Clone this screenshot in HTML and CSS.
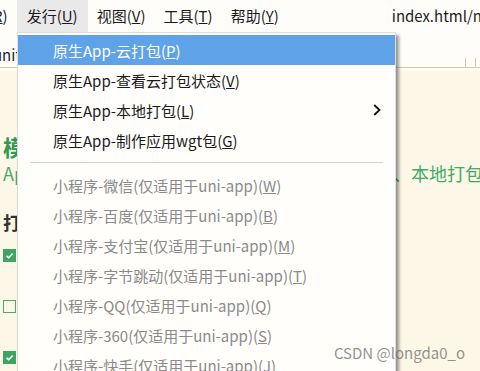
FILE: index.html
```html
<!DOCTYPE html>
<html>

<head>
    <title>发行</title>
    <link rel="stylesheet" href="styles.css">
</head>

<body>
    <div class="menubar">
        <span class="mb-item mb-cut">运行(<u>R</u>)</span>
        <span class="mb-item mb-open">发行(<u>U</u>)</span>
        <span class="mb-item">视图(<u>V</u>)</span>
        <span class="mb-item">工具(<u>T</u>)</span>
        <span class="mb-item">帮助(<u>Y</u>)</span>
        <span class="mb-title">index.html/nvue-demo - HBuilder X</span>
    </div>

    <div class="tabbar">
        <div class="tab">unitest/pages/index/index.vue</div>
        <div class="tab-next"></div>
    </div>

    <div class="content">
        <h2 class="title">模板</h2>
        <p class="desc"><span class="desc-left">App云打包</span><span>、本地打包和制作wgt包</span></p>
        <h3 class="sub">打包</h3>
        <div class="check on"><svg viewBox="0 0 13 13"><path d="M3.5 6.8 L5.6 8.7 L9.6 4.6" /></svg></div>
        <div class="check"></div>
        <div class="check on"><svg viewBox="0 0 13 13"><path d="M3.5 6.8 L5.6 8.7 L9.6 4.6" /></svg></div>
    </div>

    <div class="menu">
        <div class="mi active"><span>原生App-云打包(<u>P</u>)</span></div>
        <div class="mi"><span>原生App-查看云打包状态(<u>V</u>)</span></div>
        <div class="mi"><span>原生App-本地打包(<u>L</u>)</span>
            <svg class="arrow" viewBox="0 0 8 12"><path d="M1.2 1 L6.5 6 L1.2 11" /></svg>
        </div>
        <div class="mi"><span>原生App-制作应用wgt包(<u>G</u>)</span></div>
        <div class="sep"></div>
        <div class="mi off"><span>小程序-微信(仅适用于uni-app)(<u>W</u>)</span></div>
        <div class="mi off"><span>小程序-百度(仅适用于uni-app)(<u>B</u>)</span></div>
        <div class="mi off"><span>小程序-支付宝(仅适用于uni-app)(<u>M</u>)</span></div>
        <div class="mi off"><span>小程序-字节跳动(仅适用于uni-app)(<u>T</u>)</span></div>
        <div class="mi off"><span>小程序-QQ(仅适用于uni-app)(<u>Q</u>)</span></div>
        <div class="mi off"><span>小程序-360(仅适用于uni-app)(<u>S</u>)</span></div>
        <div class="mi off"><span>小程序-快手(仅适用于uni-app)(<u>J</u>)</span></div>
    </div>

    <div class="watermark">CSDN @longda0_o</div>
</body>

</html>
```

FILE: styles.css
```css
body {
    margin: 0;
    width: 480px;
    height: 371px;
    overflow: hidden;
    position: relative;
    background: #fefdf9;
    font-family: "Noto Sans CJK SC", sans-serif;
    font-size: 15px;
    color: #1b1b1b;
}

/* top menu bar */
.menubar {
    display: flex;
    height: 32px;
    line-height: 32px;
    white-space: nowrap;
    overflow: hidden;
}

.mb-item {
    padding: 0 9px;
    flex: none;
}

.mb-cut {
    margin-left: -51px;
}

.mb-open {
    padding: 0 10px;
    background: #e9e9e9;
}

.mb-title {
    margin-left: 104px;
    flex: none;
}

/* editor tabs */
.tabbar {
    display: flex;
    height: 35px;
    border-bottom: 1px solid #d6c8a1;
    white-space: nowrap;
    overflow: hidden;
}

.tab {
    flex: 0 0 466px;
    box-sizing: border-box;
    padding: 13px 0 0;
    text-indent: -7px;
    line-height: 20px;
    overflow: hidden;
    background: linear-gradient(#d6c8a1, #d6c8a1) right bottom / 1px 9px no-repeat;
}

.tab-next {
    flex: 0 0 20px;
    margin-left: 9px;
    background: linear-gradient(#d6c8a1, #d6c8a1) left bottom / 1px 9px no-repeat;
}

/* page content under the menu */
.content {
    border-top: 3px solid #fffcf2;
    background: #fcf7e7;
    height: 300px;
    padding-left: 3px;
}

.title {
    margin: 60px 0 0;
    font-size: 22px;
    line-height: 30px;
    color: #2f9a56;
    font-weight: bold;
}

.desc {
    margin: 0;
    display: grid;
    grid-template-columns: 390px auto;
    font-size: 18px;
    line-height: 24px;
    color: #3fab66;
    white-space: nowrap;
    overflow: hidden;
}

.desc-left {
    overflow: hidden;
}

.sub {
    margin: 25px 0 0;
    font-size: 18px;
    line-height: 24px;
    color: #333;
    font-weight: bold;
}

.check {
    width: 13px;
    height: 13px;
    box-sizing: border-box;
    border: 1.5px solid #4aa96b;
    margin-top: 38px;
}

.check:first-of-type {
    margin-top: 15px;
}

.check.on {
    background: #3ea461;
    border-color: #3ea461;
}

.check svg {
    display: block;
    width: 13px;
    height: 13px;
    margin: -1.5px;
}

.check path {
    fill: none;
    stroke: #fff;
    stroke-width: 1.6;
}

/* dropdown */
.menu {
    position: absolute;
    left: 17px;
    top: 32px;
    bottom: 0;
    width: 379px;
    box-sizing: border-box;
    border: 1px solid #dcdcdc;
    border-bottom: none;
    padding-top: 2px;
    background: #fffefb;
    box-shadow: 3px 3px 3px rgba(0, 0, 0, 0.4);
    white-space: nowrap;
    overflow: hidden;
}

.mi {
    display: flex;
    align-items: center;
    justify-content: space-between;
    height: 30px;
    padding: 0 14px 0 35px;
}

.mi.active {
    background: #5ea2e8;
    color: #fff;
}

.mi.off {
    color: #8a8a8a;
}

.sep {
    height: 1px;
    margin: 7px 12px;
    background: #d4d4d4;
}

.arrow {
    width: 8px;
    height: 12px;
}

.arrow path {
    fill: none;
    stroke: #111;
    stroke-width: 1.8;
}

.watermark {
    position: absolute;
    right: 15px;
    bottom: 8px;
    font-size: 15px;
    color: rgba(110, 110, 110, 0.75);
}
```
